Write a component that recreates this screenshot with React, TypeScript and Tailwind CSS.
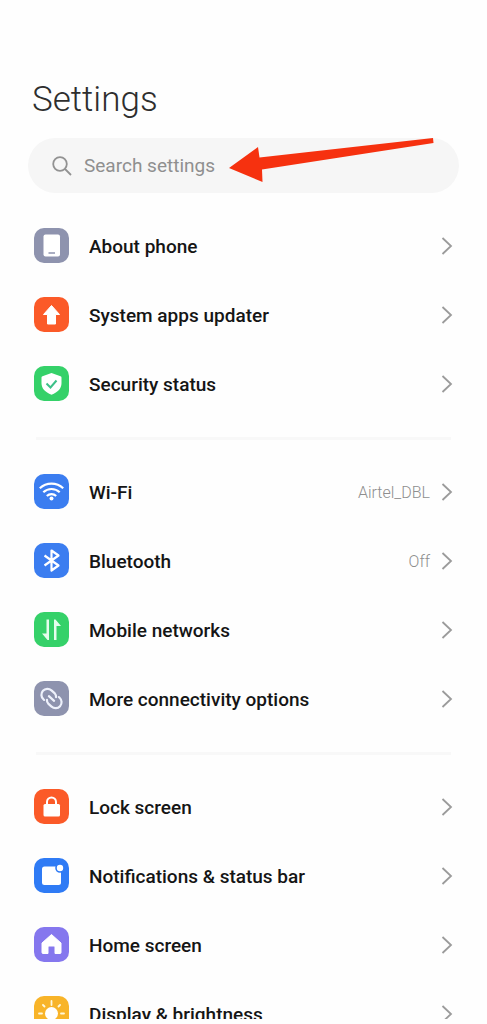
import type { ReactNode } from "react";

type Item = {
  label: string;
  color: string;
  icon: ReactNode;
  value?: string;
};

// All glyphs are drawn on the same 35x35 tile
const groups: Item[][] = [
  [
    {
      label: "About phone",
      color: "bg-[#8e93ae]",
      icon: (
        <>
          <rect x="9.5" y="6.5" width="16.5" height="22" rx="2" fill="#fff" />
          <path d="M14.5 25h6.5" stroke="#8e93ae" strokeWidth="1.6" />
        </>
      ),
    },
    {
      label: "System apps updater",
      color: "bg-[#fb5a28]",
      icon: <path d="M17.5 8.5 25.5 17.5h-4V27h-8v-9.5h-4z" fill="#fff" stroke="#fff" strokeWidth="1" strokeLinejoin="round" />,
    },
    {
      label: "Security status",
      color: "bg-[#35d169]",
      icon: (
        <>
          <path
            d="M17.5 7 26.5 10.2c.7.3 1 .7 1 1.5V17c0 5.5-3.5 9-10 11.8C11 26 7.5 22.5 7.5 17v-5.3c0-.8.3-1.2 1-1.5z"
            fill="#fff"
          />
          <path d="m12.5 17.5 4 4 6-7" fill="none" stroke="#3cc088" strokeWidth="2" />
        </>
      ),
    },
  ],
  [
    {
      label: "Wi-Fi",
      color: "bg-[#3b7df0]",
      value: "Airtel_DBL",
      icon: (
        <>
          <g fill="none" stroke="#fff" strokeWidth="2.2">
            <path d="M5.8 14.3a17 17 0 0 1 23.4 0" />
            <path d="M9.3 18.3a11.8 11.8 0 0 1 16.4 0" />
            <path d="M12.8 22a7 7 0 0 1 9.4 0" />
          </g>
          <circle cx="17.5" cy="24.5" r="2" fill="#fff" />
        </>
      ),
    },
    {
      label: "Bluetooth",
      color: "bg-[#3b7df0]",
      value: "Off",
      icon: (
        <path
          d="m10.5 12.5 14 10-7 5V7.5l7 5-14 10"
          fill="none"
          stroke="#fff"
          strokeWidth="2.2"
          strokeLinejoin="round"
        />
      ),
    },
    {
      label: "Mobile networks",
      color: "bg-[#35d169]",
      icon: (
        <path
          d="M12.5 7.5H15V28h-1.5L8 21.5h4.500zM20 28V7.500h1.500L27 14h-4.500v14z"
          fill="#e4fdec"
        />
      ),
    },
    {
      label: "More connectivity options",
      color: "bg-[#8e93ae]",
      icon: (
        <g fill="none" stroke="#eef1fb" strokeWidth="2.2" strokeLinecap="round" transform="rotate(42 17.5 17.5)">
          <path d="M13 23.5h-1a6 6 0 0 1 0-12h4.500a5 5 0 0 1 3.500 2" />
          <path d="M22 11.5h1a6 6 0 0 1 0 12h-4.500a5 5 0 0 1-3.500-2" />
          <path d="M14 17.5h7" />
        </g>
      ),
    },
  ],
  [
    {
      label: "Lock screen",
      color: "bg-[#fb5a28]",
      icon: (
        <>
          <path d="M13 16v-3a4.5 4.5 0 0 1 9 0v3" fill="none" stroke="#fff" strokeWidth="2" />
          <rect x="9.5" y="15" width="16.5" height="12.5" rx="1.5" fill="#fff" />
        </>
      ),
    },
    {
      label: "Notifications & status bar",
      color: "bg-[#2f7bf5]",
      icon: (
        <>
          <rect x="8" y="8.5" width="19" height="18.5" rx="2.5" fill="#fff" />
          <circle cx="26" cy="10" r="4" fill="#fff" stroke="#2f7bf5" strokeWidth="1.6" />
        </>
      ),
    },
    {
      label: "Home screen",
      color: "bg-[#8577ee]",
      icon: (
        <path
          d="M17.5 7.5 27 16v9.5a1 1 0 0 1-1 1h-5V20a1 1 0 0 0-1-1h-5a1 1 0 0 0-1 1v6.500H9a1 1 0 0 1-1-1V16z"
          fill="#fff"
          stroke="#fff"
          strokeWidth="1"
          strokeLinejoin="round"
        />
      ),
    },
    {
      label: "Display & brightness",
      color: "bg-[#f8b429]",
      icon: (
        <>
          <circle cx="17.5" cy="17.5" r="6.5" fill="#fff" />
          <path
            d="M17.5 5v4M17.5 26v4M5 17.5h3M27 17.5h3M9 9l1.5 1.5M24.5 24.5l1.5 1.5M26 9l-1.5 1.5M10.5 24.5 9 26"
            stroke="#fff8dc"
            strokeWidth="1.8"
            strokeLinecap="round"
          />
        </>
      ),
    },
  ],
];

function SettingsRow({ label, color, icon, value }: Item) {
  return (
    <a href="#" className="flex h-[69px] items-center px-[34px]">
      <span className={`size-[35px] shrink-0 overflow-hidden rounded-[10px] ${color}`}>
        <svg viewBox="0 0 35 35" className="size-full" aria-hidden="true">
          {icon}
        </svg>
      </span>
      <span className="ml-5 flex-1 truncate pt-0.5 text-[19px] leading-7 font-medium text-[#151515]">{label}</span>
      {value && <span className="pt-0.5 text-base font-light text-[#8e8e8e]">{value}</span>}
      <svg viewBox="0 0 12 18" className="ml-[11px] h-[18px] w-3 shrink-0" aria-hidden="true">
        <path d="m1.5 1 8.5 8-8.5 8" fill="none" stroke="#9b9b9b" strokeWidth="1.8" />
      </svg>
    </a>
  );
}

function SearchBar() {
  return (
    <div className="relative mx-7 mt-4 flex h-[55px] items-center rounded-full bg-[#f6f6f6] pl-6">
      <svg viewBox="0 0 20 20" className="size-5 shrink-0" fill="none" stroke="#929292" strokeWidth="1.8" aria-hidden="true">
        <circle cx="8" cy="8" r="6.8" />
        <path d="m13 13 6 6" />
      </svg>
      <input
        type="search"
        aria-label="Search settings"
        placeholder="Search settings"
        className="ml-3 min-w-0 flex-1 bg-transparent text-[19px] leading-7 outline-none placeholder:text-[#8f8f8f]"
      />
      <svg viewBox="0 0 206 46" className="pointer-events-none absolute top-0 left-[201px] h-[46px] w-[206px]" aria-hidden="true">
        <path d="M0 30 29 9l1.5 10.5L204 0l.5 5L33 31.5 33.5 44z" fill="#f6310f" />
      </svg>
    </div>
  );
}

export default function App() {
  return (
    <div className="flex h-screen flex-col bg-[#fefefe] pb-[5px] font-[Roboto,sans-serif]">
      <main className="min-h-0 flex-1 overflow-hidden">
        <h1 className="px-8 pt-[78px] text-[35px] leading-[44px] font-light text-[#2e2e2e]">Settings</h1>
        <SearchBar />
        <nav className="mt-[18px]">
          {groups.map((items, index) => (
            <div key={index}>
              {index > 0 && <hr className="mx-9 mt-[19px] mb-[17px] h-[3px] border-0 bg-[#f8f8f8]" />}
              {items.map((item) => (
                <SettingsRow key={item.label} {...item} />
              ))}
            </div>
          ))}
        </nav>
      </main>
    </div>
  );
}
